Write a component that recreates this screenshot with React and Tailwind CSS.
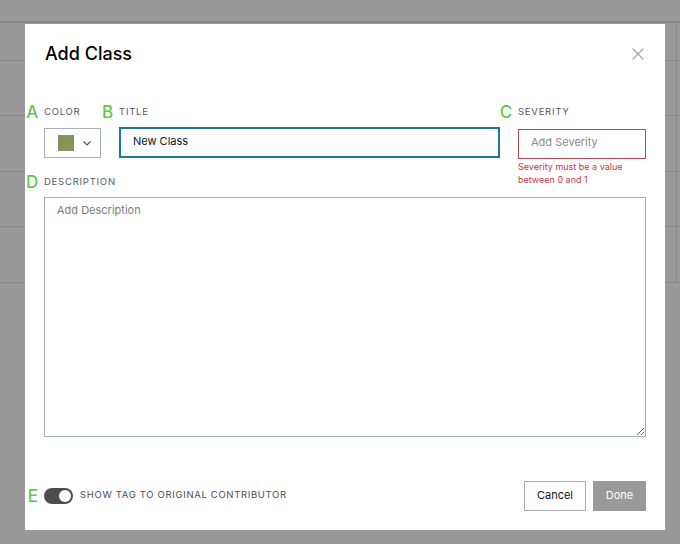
import { useState } from 'react';

const FONT = { fontFamily: 'Inter, "Noto Sans", sans-serif' };

// ── Annotation letter (green marker to the left of a label) ──────────────────
const Marker = ({ children }) => (
  <span className="absolute right-full mr-[5px] top-1/2 -translate-y-1/2 text-[17px] leading-none font-medium text-[#5fc64e]">
    {children}
  </span>
);

const FieldLabel = ({ marker, children }) => (
  <div className="relative h-[12px] flex items-center text-[9.5px] leading-[12px] tracking-[0.08em] text-[#555a5e] uppercase">
    <Marker>{marker}</Marker>
    {children}
  </div>
);

// ── Backdrop: the table behind the overlay ───────────────────────────────────
const BackdropRow = ({ h }) => (
  <div className={`flex border-b border-[#878787] ${h}`}>
    <div className="flex-1" />
    <div className="w-[4px] border-l border-[#878787]" />
  </div>
);

const Backdrop = () => (
  <div className="flex flex-col h-[544px] bg-[#999999]">
    <div className="h-[23px] border-b-2 border-[#878787]" />
    <BackdropRow h="h-[38px]" />
    <BackdropRow h="h-[55px]" />
    <BackdropRow h="h-[56px]" />
    <BackdropRow h="h-[55px]" />
    <BackdropRow h="h-[56px]" />
  </div>
);

// ── Dialog ───────────────────────────────────────────────────────────────────
const AddClassDialog = () => {
  const [title, setTitle] = useState('New Class');
  const [on, setOn] = useState(true);

  return (
    <div className="absolute left-[25px] top-[24px] w-[640px] h-[506px] bg-white flex flex-col px-[19px]">
      {/* Header */}
      <div className="flex items-center justify-between mt-[18px] h-[24px]">
        <h2 className="pl-[1px] text-[18px] leading-[24px] font-medium text-black">Add Class</h2>
        <button className="mr-[2px] text-[#a6acb0]">
          <svg viewBox="0 0 12 12" className="w-[12px] h-[12px]" fill="none" stroke="currentColor" strokeWidth="1.4" strokeLinecap="round">
            <path d="M1 1l10 10M11 1L1 11" />
          </svg>
        </button>
      </div>

      {/* Color / Title / Severity */}
      <div className="flex gap-[18px] mt-[40px]">
        <div className="w-[57px] flex flex-col">
          <FieldLabel marker="A">Color</FieldLabel>
          <button className="mt-[10px] h-[30px] border border-[#a9b0b5] flex items-center pl-[13px] gap-[9px]">
            <span className="w-[16px] h-[16px] bg-[#85955a]" />
            <svg viewBox="0 0 8 5" className="w-[8px] h-[5px]" fill="none" stroke="#4a4d52" strokeWidth="1.1">
              <path d="M0.5 0.5L4 4l3.5-3.5" />
            </svg>
          </button>
        </div>

        <div className="flex-1 flex flex-col">
          <FieldLabel marker="B">Title</FieldLabel>
          <input
            value={title}
            onChange={(e) => setTitle(e.target.value)}
            className="mt-[9px] h-[31px] border-2 border-[#1b7a93] px-[12px] pb-[3px] text-[11px] text-[#111] outline-none"
            style={FONT}
          />
        </div>

        <div className="w-[128px] flex flex-col">
          <FieldLabel marker="C">Severity</FieldLabel>
          <div className="relative mt-[10px]">
            <input
              placeholder="Add Severity"
              className="w-full h-[30px] border border-[#c2464d] px-[12px] pb-[3px] text-[11px] outline-none placeholder:text-[#8a8a8a]"
              style={FONT}
            />
            <p className="absolute left-0 top-full mt-[1px] text-[9px] leading-[13px] text-[#c1393f]">
              Severity must be a value<br />between 0 and 1
            </p>
          </div>
        </div>
      </div>

      {/* Description */}
      <div className="mt-[17px]">
        <FieldLabel marker="D">Description</FieldLabel>
      </div>
      <textarea
        placeholder="Add Description"
        className="mt-[9px] h-[240px] border border-[#a9b0b5] px-[12px] py-[5px] text-[11px] leading-[14px] outline-none placeholder:text-[#7d7d7d]"
        style={FONT}
      />

      {/* Footer */}
      <div className="mt-[44px] flex items-center justify-between">
        <div className="relative flex items-center gap-[7px]">
          <span className="absolute right-full mr-[6px] top-1/2 -translate-y-1/2 text-[17px] leading-none font-medium text-[#5fc64e]">E</span>
          <button
            onClick={() => setOn(!on)}
            className="w-[29px] h-[16px] rounded-full bg-[#4a4d52] flex items-center justify-end pr-[2px]"
          >
            <span className="w-[12px] h-[12px] rounded-full bg-white" />
          </button>
          <span className="text-[9.5px] tracking-[0.07em] text-[#4a4d52] uppercase">Show tag to original contributor</span>
        </div>
        <div className="flex gap-[7px]">
          <button className="w-[62px] h-[30px] border border-[#a9b0b5] text-[11px] text-[#111]">Cancel</button>
          <button className="w-[53px] h-[30px] bg-[#999999] text-[11px] text-white">Done</button>
        </div>
      </div>
    </div>
  );
};

const App = () => (
  <div className="relative w-[680px] h-[544px] overflow-hidden" style={FONT}>
    <Backdrop />
    <AddClassDialog />
  </div>
);

export default App;
